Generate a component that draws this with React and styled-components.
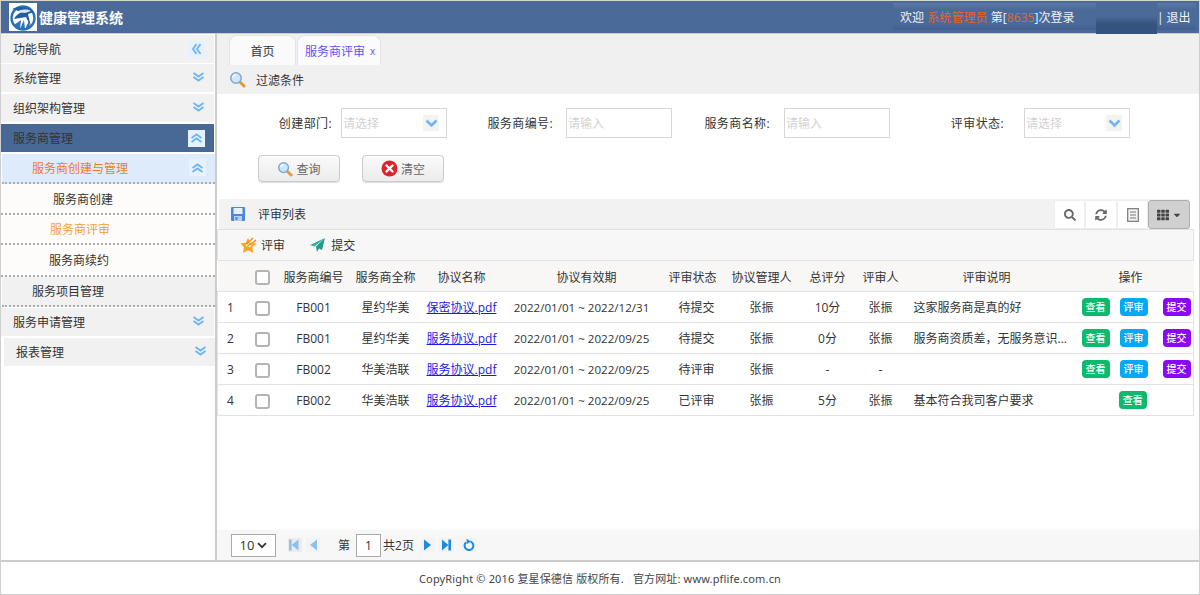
import React from 'react';
import styled, { createGlobalStyle } from 'styled-components';
import { FaSearch, FaSyncAlt, FaTh, FaCaretDown } from 'react-icons/fa';

const Global = createGlobalStyle`
  html, body { margin: 0; padding: 0; background: #fff; }
  body { font-family: "Open Sans", "Noto Sans CJK SC", sans-serif; font-size: 12px; color: #333; }
  * { box-sizing: border-box; }
`;

const Page = styled.div`
  width: 1200px;
  height: 595px;
  display: flex;
  flex-direction: column;
  overflow: hidden;
  border: 1px solid #cfcfcf;
  border-top-color: #d9d6cf;
`;

const Header = styled.header`
  height: 33px;
  flex: none;
  background: #4a6a9a;
  border-bottom: 1px solid #ccc;
  display: flex;
  align-items: center;
  padding: 0 3px 0 8px;
`;

const Brand = styled.div`
  display: flex;
  align-items: center;
  gap: 2px;
  color: #fff;
  font-size: 14px;
  font-weight: 700;
  flex: 1;
`;

const LogoBox = styled.div`
  width: 28px;
  height: 28px;
  background: #fff;
  display: flex;
`;

const UserBand = styled.div`
  width: 303px;
  height: 32px;
  padding: 2px 0 0;
  display: flex;
  align-items: flex-start;
  color: #f2f2f2;
  font-size: 12px;
`;

const UserText = styled.div`
  width: 203px;
  height: 27px;
  line-height: 29px;
  padding-left: 7px;
  letter-spacing: 0.05px;
  white-space: nowrap;
  background: linear-gradient(#5b79a6, #4a6a9a 25%, #4a6a9a 75%, #42608e);
`;

const Hot = styled.span`
  color: #e8622a;
`;

const Patch = styled.div`
  width: 61px;
  height: 27px;
  margin-top: 5px;
  flex: none;
  background: linear-gradient(#4a6a9a 30%, #35537f 60%);
`;

const Logout = styled.div`
  flex: 1;
  height: 27px;
  line-height: 29px;
  display: flex;
  gap: 3px;
  white-space: nowrap;
  background: linear-gradient(#5b79a6, #4a6a9a 25%, #4a6a9a 75%, #42608e);
`;

const Body = styled.div`
  flex: 1;
  min-height: 0;
  display: flex;
`;

const Sidebar = styled.nav`
  width: 216px;
  flex: none;
  border-right: 2px solid #ccc;
  padding-top: 1px;
  color: #333;
  font-size: 12px;
`;

const NavRow = styled.div`
  height: 28px;
  margin-bottom: ${p => (p.$tight ? 1 : 2)}px;
  margin-left: ${p => (p.$shift ? 3 : 0)}px;
  margin-right: ${p => (p.$shift ? 0 : 1)}px;
  padding-left: 12px;
  padding-right: ${p => (p.$shift ? 8 : 9)}px;
  display: flex;
  align-items: center;
  justify-content: space-between;
  background: ${p => (p.$active ? '#486996' : '#f1f1f1')};
  color: #333;
`;

const SubHead = styled.div`
  height: 30px;
  margin-left: 1px;
  padding: 0 9px 1px 30px;
  display: flex;
  align-items: center;
  justify-content: space-between;
  background: #deebfb;
  color: #ee7a2c;
  border-bottom: 2px dotted #aaa;
`;

const SubItem = styled.div`
  height: ${p => p.$height || 31}px;
  padding-left: ${p => p.$left || 52}px;
  display: flex;
  align-items: center;
  background: #fdfcfb;
  color: ${p => (p.$current ? '#f6a035' : '#333')};
  border-bottom: 2px dotted #aaa;
`;

const SubGroup = styled(SubItem)`
  height: 30px;
  margin-bottom: 1px;
  margin-left: 1px;
  padding-left: 30px;
  background: #f1f1f1;
`;

const Toggle = styled.span`
  width: ${p => (p.$box ? 17 : 14)}px;
  height: ${p => (p.$box ? 17 : 14)}px;
  margin-bottom: ${p => (p.$box ? 0 : 3)}px;
  display: inline-flex;
  align-items: center;
  justify-content: center;
  background: ${p => (p.$box ? '#e8f2fc' : 'transparent')};
  color: #6eb6f2;
`;

const Main = styled.main`
  flex: 1;
  min-width: 0;
  display: flex;
  flex-direction: column;
`;

const Tabs = styled.div`
  height: 31px;
  flex: none;
  background: #f0f0f0;
  padding: 1px 0 0 12px;
  display: flex;
  gap: 1px;
`;

const Tab = styled.div`
  width: ${p => p.$width}px;
  height: 30px;
  padding-left: ${p => (p.$active ? 2 : 0)}px;
  border: 1px solid #e4e4e4;
  border-bottom: none;
  border-radius: 8px 8px 0 0;
  background: ${p => (p.$active ? '#fbfbff' : '#fafafa')};
  color: ${p => (p.$active ? '#5a55f0' : '#333')};
  display: flex;
  align-items: center;
  justify-content: center;
  gap: 5px;
  font-size: 12px;
  white-space: nowrap;
`;

const Close = styled.span`
  font-size: 10px;
`;

const FilterBar = styled.div`
  height: 29px;
  flex: none;
  background: #f0f0f0;
  padding-left: 12px;
  display: flex;
  align-items: center;
  gap: 10px;
`;

const FilterForm = styled.div`
  height: 105px;
  flex: none;
  padding-top: 14px;
  display: flex;
  flex-direction: column;
  gap: 17px;
`;

const FieldRow = styled.div`
  display: flex;
  align-items: center;
  height: 30px;
`;

const Label = styled.label`
  width: ${p => p.$width}px;
  padding-right: ${p => p.$gap}px;
  text-align: right;
  flex: none;
  color: #333;
  letter-spacing: 0.4px;
`;

const Box = styled.div`
  width: 106px;
  height: 30px;
  flex: none;
  border: 1px solid #d6d6d6;
  display: flex;
  align-items: center;
  justify-content: space-between;
  padding: 0 7px 0 1px;
  color: #d2d2d2;
  font-size: 12px;
`;

const Arrow = styled.span`
  width: 16px;
  height: 16px;
  background: #f3f3f3;
  display: flex;
  align-items: center;
  justify-content: center;
  color: #6eb6f2;
`;

const ButtonRow = styled.div`
  display: flex;
  gap: 22px;
  padding-left: 41px;
`;

const FormButton = styled.button`
  width: 82px;
  height: 27px;
  border: 1px solid #ccc;
  border-radius: 4px;
  background: linear-gradient(#fafafa, #ececec);
  box-shadow: 0 1px 1px #ddd;
  color: #666;
  display: flex;
  align-items: center;
  justify-content: center;
  gap: 3px;
  font: inherit;
`;

const ListBar = styled.div`
  height: 30px;
  flex: none;
  margin-left: 2px;
  margin-right: 9px;
  display: flex;
  background: #f2f2f2;
`;

const ListTitle = styled.div`
  flex: 1;
  display: flex;
  align-items: center;
  gap: 13px;
  padding-left: 12px;
`;

const ToolGroup = styled.div`
  display: flex;
  width: 136px;
  background: #fff;
  margin-top: 1px;
`;

const ToolButton = styled.div`
  flex: ${p => (p.$active ? '1.35' : '1')};
  border: 1px solid ${p => (p.$active ? '#aeaeae' : '#eeeeee')};
  border-radius: ${p => (p.$active ? '3px' : '0')};
  background: ${p => (p.$active ? '#d0d0d0' : '#fff')};
  color: ${p => (p.$active ? '#444' : '#6a6a6a')};
  display: flex;
  align-items: center;
  justify-content: center;
  gap: 3px;
  font-size: 13px;
`;

const TableWrap = styled.div`
  flex: 1;
  min-height: 0;
  margin-right: 5px;
`;

const ActionBar = styled.div`
  height: 31px;
  display: flex;
  align-items: center;
  gap: 25px;
  padding-left: 22px;
  background: #f7f7f7;
  border: 1px solid #e2e2e2;
  border-bottom: none;
`;

const Action = styled.span`
  display: inline-flex;
  align-items: center;
  gap: 3px;
  font-size: 12px;
`;

const Table = styled.table`
  width: 976px;
  table-layout: fixed;
  border-collapse: collapse;
  font-size: 12px;
`;

const Th = styled.th`
  height: 31px;
  font-weight: 400;
  text-align: center;
  background: #f8f7f5;
  border-top: 1px solid #e2e2e2;
  border-bottom: 1px solid #e2e2e2;
  white-space: nowrap;
  padding: 1px 0 0 ${p => p.$indent || 0}px;
`;

const Tr = styled.tr`
  border-bottom: 1px solid #e2e2e2;
`;

const Td = styled.td`
  height: 31px;
  padding: 0 0 0 ${p => (p.$left ? 8 : p.$indent || 0)}px;
  text-align: ${p => (p.$left ? 'left' : 'center')};
  white-space: nowrap;
  overflow: hidden;
  text-overflow: ellipsis;
  color: #333;
  &:first-child { border-left: 1px solid #e2e2e2; text-align: left; padding-left: 9px; }
  &:last-child { border-right: 1px solid #e2e2e2; }
`;

const DateText = styled.span`
  font-size: 11.6px;
`;

const Check = styled.span`
  display: inline-block;
  width: 15px;
  height: 15px;
  vertical-align: middle;
  border: 2px solid #b4b4b4;
  border-radius: 3px;
  background: #fff;
`;

const DocLink = styled.a`
  color: #1a1ae6;
  text-decoration: underline;
  font-size: 12px;
`;

const Ops = styled.div`
  display: flex;
  justify-content: ${p => (p.$single ? 'center' : 'flex-start')};
  padding-left: ${p => (p.$single ? 5 : 14)}px;
`;

const Op = styled.span`
  width: 28px;
  height: 18px;
  margin-right: ${p => p.$mr || 0}px;
  line-height: 18px;
  border-radius: 4px;
  text-align: center;
  font-size: 10px;
  font-weight: 500;
  color: #fff;
  background: ${p => p.$color};
`;

const Pager = styled.div`
  height: 30px;
  flex: none;
  background: #f7f7f7;
  padding-left: 14px;
  display: flex;
  align-items: center;
`;

const PageSize = styled.div`
  width: 45px;
  height: 23px;
  border: 1px solid #aaa;
  background: #fff;
  color: #333;
  display: flex;
  align-items: center;
  justify-content: center;
  gap: 3px;
  font-size: 13px;
  margin-right: 12px;
`;

const PageIcon = styled.span`
  width: 14px;
  height: 14px;
  flex: none;
  display: inline-flex;
  background: ${p => (p.$dim ? '#ececec' : '#f3f3f3')};
  margin-left: ${p => p.$ml || 0}px;
  margin-right: ${p => p.$mr || 0}px;
`;

const PageNo = styled.div`
  width: 25px;
  height: 23px;
  border: 1px solid #aaa;
  background: #fff;
  margin: 0 2px 0 6px;
  display: flex;
  align-items: center;
  justify-content: center;
`;

const Footer = styled.footer`
  height: 34px;
  flex: none;
  border-top: 2px solid #ccc;
  display: flex;
  align-items: center;
  justify-content: center;
  white-space: pre;
  color: #444;
  font-size: 11px;
  letter-spacing: 0.15px;
  font-family: "Noto Sans", "Noto Sans CJK SC", sans-serif;
`;

const Logo = () => (
  <svg width="28" height="28" viewBox="0 0 28 28">
    <circle cx="14" cy="15" r="11.5" fill="#fff" stroke="#2a73ba" strokeWidth="2.4" />
    <path d="M3 6 C9 3 20 3 25 9 L19 11 L22 24 L17 14 C13 15 9 15 5 16 C7 12 10 10 13 9 Z" fill="#1f5f9f" />
    <path d="M8 9 C12 6 18 6 22 8 L16 10 Z" fill="#dbe8f4" />
    <path d="M5 22 L12 17 L11 26 L15 17 L16 26 L20 18 L21 24 C17 28 9 28 5 22 Z" fill="#2a73ba" />
  </svg>
);

const DoubleChevron = ({ turn = 0 }) => (
  <svg width="13" height="12" viewBox="0 0 13 12" transform={`rotate(${turn})`}>
    <path d="M1.5 2 L6.5 5.5 L11.5 2 M1.5 6 L6.5 9.5 L11.5 6" stroke="currentColor" strokeWidth="1.9" fill="none" />
  </svg>
);

const SingleChevron = () => (
  <svg width="13" height="9" viewBox="0 0 13 9">
    <path d="M1.5 1.5 L6.5 6.5 L11.5 1.5" stroke="currentColor" strokeWidth="2.6" fill="none" />
  </svg>
);

const SelectCaret = () => (
  <svg width="10" height="7" viewBox="0 0 10 7">
    <path d="M1 1.2 L5 5.2 L9 1.2" stroke="#333" strokeWidth="1.7" fill="none" />
  </svg>
);

const Lens = ({ size = 17 }) => (
  <svg width={size} height={size} viewBox="0 0 17 17">
    <path d="M10.5 10.5 L15 15" stroke="#e59a3a" strokeWidth="3" strokeLinecap="round" />
    <circle cx="7" cy="7" r="5.2" fill="#cfe6f8" stroke="#7fa9d0" strokeWidth="1.5" />
    <path d="M4 6.5 A3.4 3.4 0 0 1 7 3.6" stroke="#fff" strokeWidth="1.3" fill="none" />
  </svg>
);

const ClearIcon = () => (
  <svg width="17" height="17" viewBox="0 0 17 17">
    <circle cx="8.5" cy="8.5" r="8" fill="#d9262c" />
    <path d="M5.5 5.5 L11.5 11.5 M11.5 5.5 L5.5 11.5" stroke="#fff" strokeWidth="2.4" strokeLinecap="round" />
  </svg>
);

const Floppy = () => (
  <svg width="14" height="14" viewBox="0 0 14 14">
    <rect width="14" height="14" rx="1" fill="#4a86e0" />
    <rect x="2.5" y="1" width="9" height="6" fill="#e6effb" />
    <rect x="3" y="9" width="8" height="5" fill="#b9cdea" />
    <rect x="4.5" y="10" width="2" height="3" fill="#4a86e0" />
  </svg>
);

const ListIcon = () => (
  <svg width="12" height="14" viewBox="0 0 12 14">
    <rect x="0.7" y="0.7" width="10.6" height="12.6" fill="#f4f4f4" stroke="#777" strokeWidth="1.2" />
    <path d="M3 4 H9 M3 7 H9 M3 10 H9" stroke="#777" strokeWidth="1.1" />
  </svg>
);

const StarPen = () => (
  <svg width="18" height="18" viewBox="0 0 18 18">
    <path d="M8 2 L10.4 6.6 L16.5 7.4 L12.2 11.2 L13.4 17 L8 14.2 L3 17 L4 11.2 L0.5 7.4 L5.8 6.6 Z" fill="#f5a623" />
    <path d="M6 10 L14 1.5 M9 11 L17 3" stroke="#fff" strokeWidth="1.2" />
    <path d="M7 8 L13 2 M10 9 L16 4" stroke="#f08a12" strokeWidth="1.4" />
  </svg>
);

const Plane = () => (
  <svg width="15" height="14" viewBox="0 0 15 14">
    <path d="M15 0 L0 7 L4.5 8.5 Z" fill="#2fae9c" />
    <path d="M15 0 L6 8.5 L7 14 L9 10.5 L12 12 Z" fill="#1f9a8a" />
  </svg>
);

const First = ({ color }) => (
  <svg width="14" height="14" viewBox="0 0 14 14"><rect x="1" y="1.5" width="2.6" height="11" fill={color} /><path d="M10.5 1.5 V12.5 L3.6 7 Z" fill={color} /></svg>
);
const Prev = ({ color }) => (
  <svg width="14" height="14" viewBox="0 0 14 14"><path d="M11 1.5 V12.5 L4 7 Z" fill={color} /></svg>
);
const Next = ({ color }) => (
  <svg width="14" height="14" viewBox="0 0 14 14"><path d="M3 1.5 V12.5 L10 7 Z" fill={color} /></svg>
);
const Last = ({ color }) => (
  <svg width="14" height="14" viewBox="0 0 14 14"><path d="M3 1.5 V12.5 L9.4 7 Z" fill={color} /><rect x="9.4" y="1.5" width="2.6" height="11" fill={color} /></svg>
);
const Reload = ({ color }) => (
  <svg width="14" height="14" viewBox="0 0 14 14">
    <path d="M8.2 3.4 A4.4 4.4 0 1 1 4.2 4.2" stroke={color} strokeWidth="2" fill="none" />
    <path d="M4.5 0.8 L8.8 3.4 L5 6 Z" fill={color} />
  </svg>
);

const columns = [30, 30, 72, 72, 80, 160, 62, 76, 56, 50, 162, 126];

const rows = [
  { no: 1, code: 'FB001', name: '星约华美', doc: '保密协议.pdf', date: '2022/01/01 ~ 2022/12/31', state: '待提交', owner: '张振', score: '10分', rater: '张振', note: '这家服务商是真的好', ops: 3 },
  { no: 2, code: 'FB001', name: '星约华美', doc: '服务协议.pdf', date: '2022/01/01 ~ 2022/09/25', state: '待提交', owner: '张振', score: '0分', rater: '张振', note: '服务商资质差，无服务意识...', ops: 3 },
  { no: 3, code: 'FB002', name: '华美浩联', doc: '服务协议.pdf', date: '2022/01/01 ~ 2022/09/25', state: '待评审', owner: '张振', score: '-', rater: '-', note: '', ops: 3 },
  { no: 4, code: 'FB002', name: '华美浩联', doc: '服务协议.pdf', date: '2022/01/01 ~ 2022/09/25', state: '已评审', owner: '张振', score: '5分', rater: '张振', note: '基本符合我司客户要求', ops: 1 },
];

const headers = ['', null, '服务商编号', '服务商全称', '协议名称', '协议有效期', '评审状态', '协议管理人', '总评分', '评审人', '评审说明', '操作'];

export default function App() {
  return (
    <Page>
      <Global />
      <Header>
        <Brand>
          <LogoBox><Logo /></LogoBox>
          健康管理系统
        </Brand>
        <UserBand>
          <UserText>欢迎 <Hot>系统管理员</Hot> 第[<Hot>8635</Hot>]次登录</UserText>
          <Patch />
          <Logout><span>|</span><span>退出</span></Logout>
        </UserBand>
      </Header>
      <Body>
        <Sidebar>
          <NavRow $tight>功能导航<Toggle $box><DoubleChevron turn={90} /></Toggle></NavRow>
          <NavRow>系统管理<Toggle><DoubleChevron /></Toggle></NavRow>
          <NavRow>组织架构管理<Toggle><DoubleChevron /></Toggle></NavRow>
          <NavRow $active>服务商管理<Toggle $box><DoubleChevron turn={180} /></Toggle></NavRow>
          <SubHead>服务商创建与管理<Toggle $box><DoubleChevron turn={180} /></Toggle></SubHead>
          <SubItem>服务商创建</SubItem>
          <SubItem $left={49} $height={30} $current>服务商评审</SubItem>
          <SubItem $left={48} $height={32}>服务商续约</SubItem>
          <SubGroup>服务项目管理</SubGroup>
          <NavRow>服务申请管理<Toggle><DoubleChevron /></Toggle></NavRow>
          <NavRow $shift>报表管理<Toggle><DoubleChevron /></Toggle></NavRow>
        </Sidebar>
        <Main>
          <Tabs>
            <Tab $width={67}>首页</Tab>
            <Tab $width={84} $active>服务商评审<Close>x</Close></Tab>
          </Tabs>
          <FilterBar><Lens />过滤条件</FilterBar>
          <FilterForm>
            <FieldRow>
              <Label $width={124} $gap={9}>创建部门:</Label>
              <Box>请选择<Arrow><SingleChevron /></Arrow></Box>
              <Label $width={119} $gap={13}>服务商编号:</Label>
              <Box>请输入</Box>
              <Label $width={112} $gap={14}>服务商名称:</Label>
              <Box>请输入</Box>
              <Label $width={134} $gap={20}>评审状态:</Label>
              <Box>请选择<Arrow><SingleChevron /></Arrow></Box>
            </FieldRow>
            <ButtonRow>
              <FormButton><Lens size={16} />查询</FormButton>
              <FormButton><ClearIcon />清空</FormButton>
            </ButtonRow>
          </FilterForm>
          <ListBar>
            <ListTitle><Floppy />评审列表</ListTitle>
            <ToolGroup>
              <ToolButton><FaSearch size={12} /></ToolButton>
              <ToolButton><FaSyncAlt size={12} /></ToolButton>
              <ToolButton><ListIcon /></ToolButton>
              <ToolButton $active><FaTh size={12} /><FaCaretDown size={10} /></ToolButton>
            </ToolGroup>
          </ListBar>
          <TableWrap>
            <ActionBar>
              <Action><StarPen />评审</Action>
              <Action><Plane />&nbsp;提交</Action>
            </ActionBar>
            <Table>
              <colgroup>
                {columns.map((w, i) => <col key={i} width={w} />)}
              </colgroup>
              <thead>
                <tr>
                  {headers.map((h, i) => <Th key={i} $indent={i === 5 ? 10 : 0}>{h === null ? <Check /> : h}</Th>)}
                </tr>
              </thead>
              <tbody>
                {rows.map(r => (
                  <Tr key={r.no}>
                    <Td>{r.no}</Td>
                    <Td><Check /></Td>
                    <Td>{r.code}</Td>
                    <Td>{r.name}</Td>
                    <Td><DocLink href="#">{r.doc}</DocLink></Td>
                    <Td><DateText>{r.date}</DateText></Td>
                    <Td $indent={8}>{r.state}</Td>
                    <Td>{r.owner}</Td>
                    <Td>{r.score}</Td>
                    <Td>{r.rater}</Td>
                    <Td $left>{r.note}</Td>
                    <Td>
                      {r.ops === 3 ? (
                        <Ops>
                          <Op $color="#0cba6e" $mr={10}>查看</Op>
                          <Op $color="#03a9f4" $mr={15}>评审</Op>
                          <Op $color="#8b08f4">提交</Op>
                        </Ops>
                      ) : (
                        <Ops $single><Op $color="#0cba6e">查看</Op></Ops>
                      )}
                    </Td>
                  </Tr>
                ))}
              </tbody>
            </Table>
          </TableWrap>
          <Pager>
            <PageSize>10<SelectCaret /></PageSize>
            <PageIcon $dim $mr={4}><First color="#8cc0ec" /></PageIcon>
            <PageIcon $mr={18}><Prev color="#8cc0ec" /></PageIcon>
            第
            <PageNo>1</PageNo>
            共2页
            <PageIcon $ml={7} $mr={4}><Next color="#1d8ade" /></PageIcon>
            <PageIcon $mr={9}><Last color="#1d8ade" /></PageIcon>
            <PageIcon><Reload color="#1d8ade" /></PageIcon>
          </Pager>
        </Main>
      </Body>
      <Footer>CopyRight © 2016 复星保德信 版权所有.   官方网址: www.pflife.com.cn</Footer>
    </Page>
  );
}
